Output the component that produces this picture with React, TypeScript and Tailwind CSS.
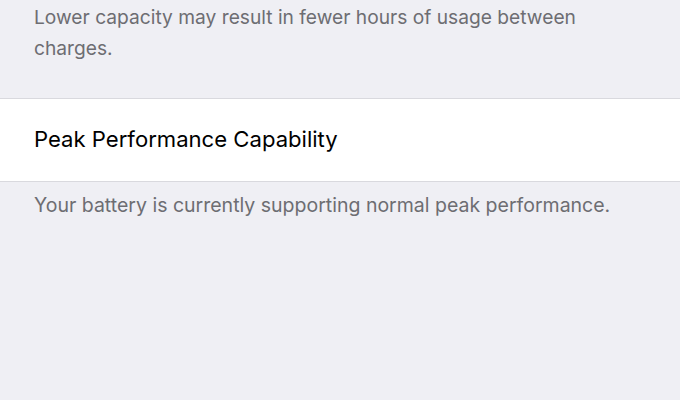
export default function App() {
  return (
    <div className="w-[680px] h-[400px] overflow-hidden bg-[#efeff4]" style={{ fontFamily: 'Inter, "Liberation Sans", sans-serif' }}>
      <div className="pl-[34px] pt-[2px] text-[19.2px] leading-[31px] text-[#6d6d72]">
        <p>Lower capacity may result in fewer hours of usage between</p>
        <p>charges.</p>
      </div>
      <div className="mt-[34px] bg-white border-y border-[#d9d9de] h-[84px] flex items-center pl-[34px]">
        <span className="text-[22.1px] text-black">Peak Performance Capability</span>
      </div>
      <p className="pl-[34px] pt-[8px] text-[19.5px] leading-[31px] text-[#6d6d72]">
        Your battery is currently supporting normal peak performance.
      </p>
    </div>
  );
}
